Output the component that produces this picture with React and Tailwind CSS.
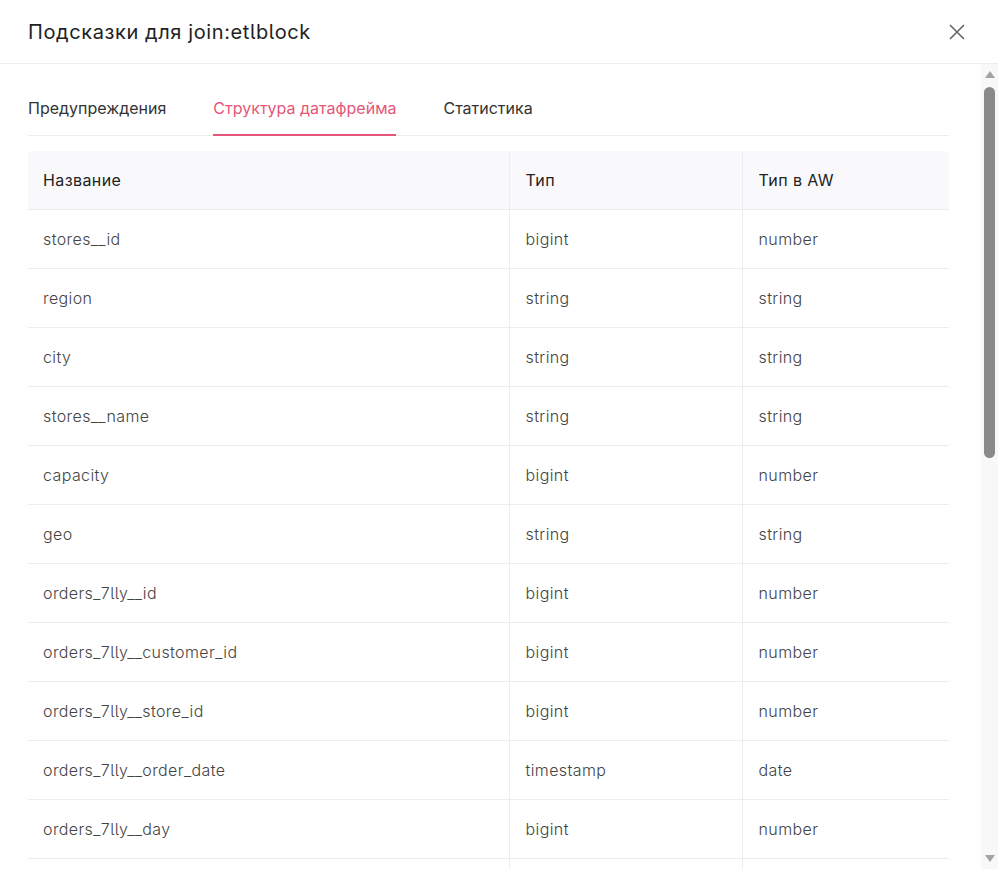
import React, { useState } from "react";

const rows = [
    ["stores__id", "bigint", "number"],
    ["region", "string", "string"],
    ["city", "string", "string"],
    ["stores__name", "string", "string"],
    ["capacity", "bigint", "number"],
    ["geo", "string", "string"],
    ["orders_7lly__id", "bigint", "number"],
    ["orders_7lly__customer_id", "bigint", "number"],
    ["orders_7lly__store_id", "bigint", "number"],
    ["orders_7lly__order_date", "timestamp", "date"],
    ["orders_7lly__day", "bigint", "number"],
    ["orders_7lly__month", "bigint", "number"],
    ["orders_7lly__year", "bigint", "number"],
    ["orders_7lly__amount", "double", "number"],
];

const tabs = ["Предупреждения", "Структура датафрейма", "Статистика"];

export default function App() {
    const [activeTab, setActiveTab] = useState(1);

    return (
        <div className="h-[869px] w-full bg-white flex flex-col text-[#444] font-['Inter','Noto_Sans',sans-serif] [font-feature-settings:'cv05']">
            {/* Шапка */}
            <div className="h-16 shrink-0 flex items-center justify-between pl-7 pr-[33px] border-b border-[#ececec]">
                <h1 className="text-[20px] tracking-[0.03em] text-[#222]">Подсказки для join:etlblock</h1>
                <button className="text-[#666]">
                    <svg width="16" height="16" viewBox="0 0 16 16" fill="none" stroke="currentColor" strokeWidth="1.6">
                        <path d="M1 1L15 15M15 1L1 15" />
                    </svg>
                </button>
            </div>

            <div className="flex-1 flex min-h-0">
                <div className="flex-1 overflow-hidden">
                    <div className="pl-7 pr-8 pt-8">
                        {/* Вкладки */}
                        <div className="flex gap-[47px] border-b border-[#ececec]">
                            {tabs.map((tab, i) => (
                                <button
                                    key={tab}
                                    onClick={() => setActiveTab(i)}
                                    className={
                                        i === activeTab
                                            ? "pb-[14px] -mb-px border-b-2 border-[#e5577a] text-[#e5577a] text-base"
                                            : "pb-[14px] -mb-px border-b-2 border-transparent text-[#333] text-base"
                                    }
                                >
                                    {tab}
                                </button>
                            ))}
                        </div>

                        {/* Таблица */}
                        <table className="w-full mt-[15px] border-collapse text-base tracking-[0.025em]">
                            <thead>
                                <tr className="bg-[#f9f9fb]">
                                    <th className="h-[58px] w-[481px] pl-[15px] text-left font-normal text-[#222] rounded-tl-[4px] border-b border-[#ececf0]">
                                        Название
                                    </th>
                                    <th className="h-[58px] w-[233px] pl-4 text-left font-normal text-[#222] border-l border-b border-[#ececf0]">
                                        Тип
                                    </th>
                                    <th className="h-[58px] pl-4 text-left font-normal text-[#222] rounded-tr-[4px] border-l border-b border-[#ececf0]">
                                        Тип в AW
                                    </th>
                                </tr>
                            </thead>
                            <tbody className="font-light">
                                {rows.map(([name, type, awType]) => (
                                    <tr key={name}>
                                        <td className="h-[59px] pl-[15px] border-b border-[#ececf0]">{name}</td>
                                        <td className="h-[59px] pl-4 border-l border-b border-[#ececf0]">{type}</td>
                                        <td className="h-[59px] pl-4 border-l border-b border-[#ececf0]">{awType}</td>
                                    </tr>
                                ))}
                            </tbody>
                        </table>
                    </div>
                </div>

                {/* Полоса прокрутки */}
                <div className="w-[17px] shrink-0 bg-[#f8f8f8] flex flex-col items-center pt-[7px] pb-[7px]">
                    <svg width="10" height="7" viewBox="0 0 10 7" className="text-[#a3a3a3]">
                        <path d="M5 0L10 7H0Z" fill="currentColor" />
                    </svg>
                    <div className="w-[11px] h-[371px] mt-[9px] rounded-full bg-[#8a8a8a]" />
                    <div className="flex-1" />
                    <svg width="10" height="7" viewBox="0 0 10 7" className="text-[#a3a3a3]">
                        <path d="M0 0H10L5 7Z" fill="currentColor" />
                    </svg>
                </div>
            </div>
        </div>
    );
}
